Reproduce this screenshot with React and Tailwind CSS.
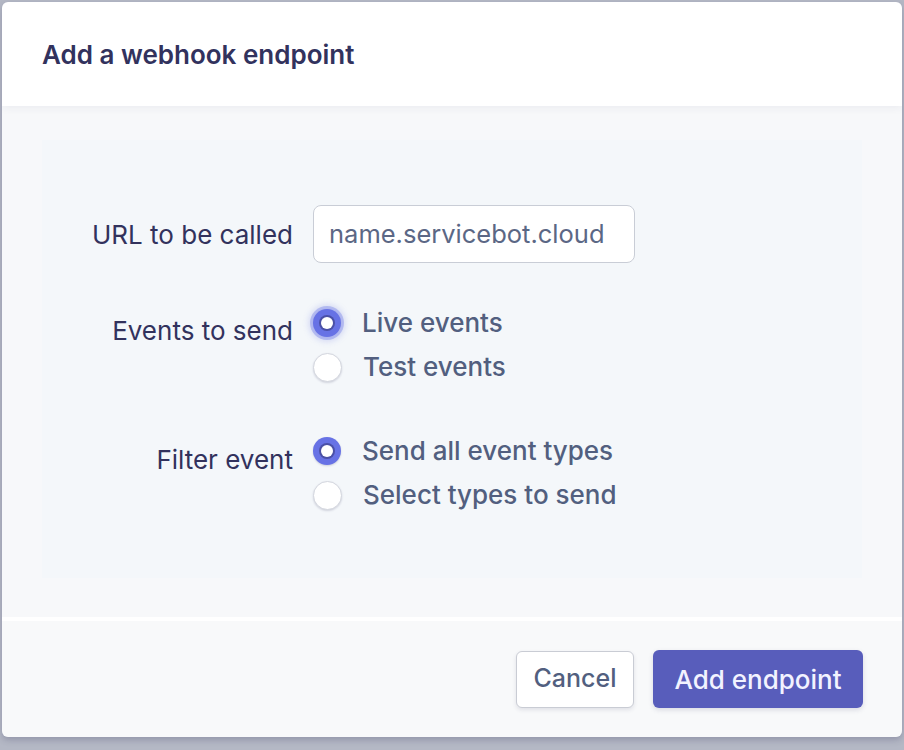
import React from "react";

function Radio({ checked, label, glow }) {
  return (
    <div className="flex h-[44px] items-center gap-[21px]">
      {checked ? (
        <span
          className={
            "flex h-[28px] w-[28px] items-center justify-center rounded-full bg-[#6772e5] " +
            (glow
              ? "shadow-[0_0_0_3px_rgba(103,114,229,0.35),0_0_6px_4px_rgba(103,114,229,0.25)]"
              : "shadow-[0_1px_2px_rgba(50,50,93,0.2)]")
          }
        >
          <span className="h-[12px] w-[12px] rounded-full bg-white shadow-[0_0_0_2px_rgba(40,40,90,0.45)]" />
        </span>
      ) : (
        <span className="h-[29px] w-[29px] rounded-full border border-[#d3d6de] bg-white shadow-[0_1px_2px_rgba(50,50,93,0.18)]" />
      )}
      <span className="text-[26px] font-medium leading-none text-[#525f7f]">{label}</span>
    </div>
  );
}

export default function App() {
  return (
    <div
      className="min-h-[750px] w-[904px] bg-[#b4b8c5] pl-[2px] pt-[2px]"
      style={{ fontFamily: "Inter, 'Noto Sans', sans-serif" }}
    >
      <div className="flex h-[735px] w-[900px] flex-col overflow-hidden rounded-[6px] shadow-[0_3px_6px_rgba(50,50,93,0.25)]">
        <div className="relative z-10 flex h-[104px] items-center bg-white px-[40px] shadow-[0_2px_8px_rgba(50,50,93,0.06)]">
          <h1 className="text-[26px] font-semibold text-[#32325d]">Add a webhook endpoint</h1>
        </div>
        <div className="flex-1 bg-[#f7f8fa] px-[40px] pb-[39px] pt-[34px]">
          <div className="h-[438px] bg-[#f4f7fa] pt-[65px]">
            <div className="grid grid-cols-[251px_1fr] gap-x-[20px]">
              <div className="flex h-[58px] items-center justify-end text-[26px] text-[#32325d]">
                URL to be called
              </div>
              <div>
                <div className="flex h-[58px] w-[322px] items-center rounded-[8px] border border-[#c9cdd6] bg-white px-[15px] text-[25.5px] text-[#5b6785]">
                  name.servicebot.cloud
                </div>
              </div>

              <div className="mt-[38px] flex h-[44px] items-center justify-end pt-[14px] text-[26px] text-[#32325d]">
                Events to send
              </div>
              <div className="mt-[38px] flex flex-col">
                <Radio checked glow label="Live events" />
                <Radio label="Test events" />
              </div>

              <div className="mt-[40px] flex h-[44px] items-center justify-end pt-[16px] text-[26px] text-[#32325d]">
                Filter event
              </div>
              <div className="mt-[40px] flex flex-col">
                <Radio checked label="Send all event types" />
                <Radio label="Select types to send" />
              </div>
            </div>
          </div>
        </div>
        <div className="h-[4px] bg-white" />
        <div className="flex h-[116px] items-center justify-end gap-[19px] bg-[#f8f9fa] pr-[39px]">
          <button className="h-[57px] w-[118px] rounded-[6px] border border-[#c9ccd4] bg-white text-[25px] font-medium text-[#525f7f] shadow-[0_2px_4px_rgba(50,50,93,0.12)]">
            Cancel
          </button>
          <button className="h-[58px] w-[210px] rounded-[6px] bg-[#585dbb] text-[26px] font-medium text-[#f2f3ff] shadow-[0_2px_5px_rgba(50,50,93,0.15)]">
            Add endpoint
          </button>
        </div>
      </div>
    </div>
  );
}
